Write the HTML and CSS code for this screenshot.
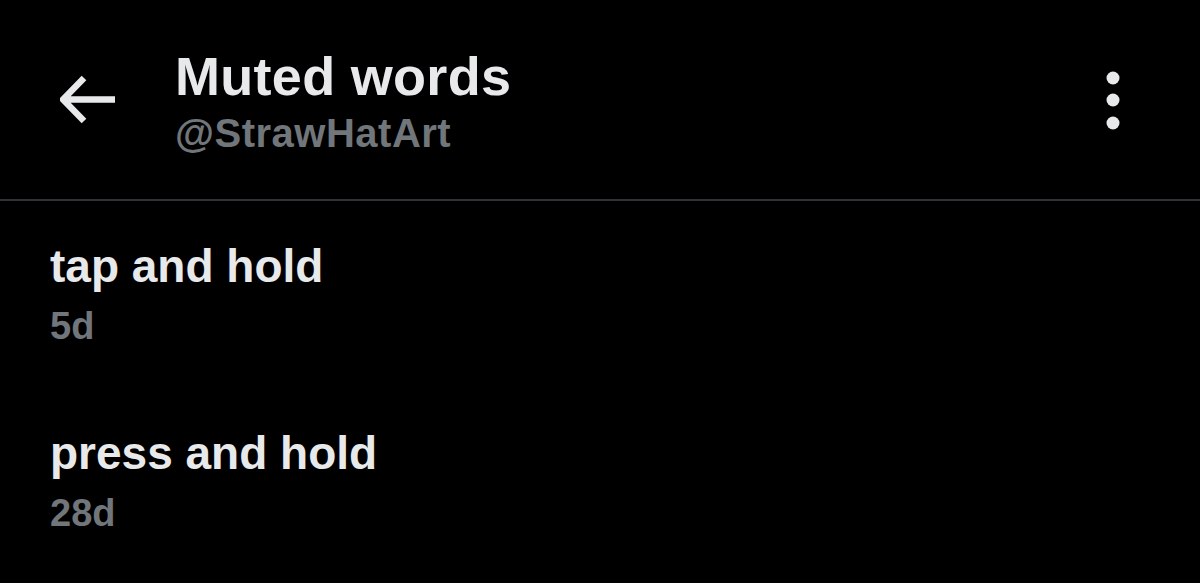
FILE: index.html
```html
<!DOCTYPE html>
<html>
<head>
    <title>Muted words</title>
    <link rel="stylesheet" href="styles.css">
</head>
<body>
    <div class="screen">
        <div class="top-bar">
            <div class="back-btn">
                <svg width="60" height="50" viewBox="0 0 60 50">
                    <path d="M24 3 L3 24.5 L24 46 M3 24.5 L55 24.5" fill="none" stroke="#e7e9ea" stroke-width="6.5" stroke-linejoin="miter"/>
                </svg>
            </div>
            <div class="title-block">
                <h1>Muted words</h1>
                <div class="handle">@StrawHatArt</div>
            </div>
            <div class="more-btn">
                <svg width="14" height="60" viewBox="0 0 14 60">
                    <circle cx="7" cy="7" r="6.5" fill="#e7e9ea"/>
                    <circle cx="7" cy="29" r="6.5" fill="#e7e9ea"/>
                    <circle cx="7" cy="52" r="6.5" fill="#e7e9ea"/>
                </svg>
            </div>
        </div>

        <div class="word-list">
            <div class="word-item">
                <div class="word">tap and hold</div>
                <div class="age">5d</div>
            </div>
            <div class="word-item">
                <div class="word">press and hold</div>
                <div class="age">28d</div>
            </div>
        </div>
    </div>
</body>
</html>
```

FILE: styles.css
```css
body {
    margin: 0;
    background-color: #000;
    font-family: "Liberation Sans", Arial, sans-serif;
    color: #e7e9ea;
}

.screen {
    width: 1200px;
    height: 583px;
    overflow: hidden;
}

.top-bar {
    display: flex;
    align-items: flex-start;
    height: 201px;
    box-sizing: border-box;
    padding-top: 47px;
    border-bottom: 2px solid #2f3336;
}

.back-btn {
    width: 115px;
    padding-left: 60px;
    padding-top: 28px;
}

.title-block {
    flex: 1;
}

h1 {
    margin: 0;
    font-size: 54px;
    font-weight: bold;
    line-height: 58px;
    letter-spacing: 0.3px;
}

.handle {
    margin-top: 6px;
    font-size: 40px;
    font-weight: bold;
    line-height: 44px;
    color: #71767b;
    letter-spacing: 0.5px;
}

.more-btn {
    padding-top: 24px;
    padding-right: 80px;
}

.word-list {
    padding: 40px 50px 0;
}

.word-item {
    margin-bottom: 80px;
}

.word {
    font-size: 46px;
    font-weight: bold;
    line-height: 50px;
}

.age {
    margin-top: 13px;
    font-size: 38px;
    font-weight: bold;
    line-height: 44px;
    color: #71767b;
}
```
